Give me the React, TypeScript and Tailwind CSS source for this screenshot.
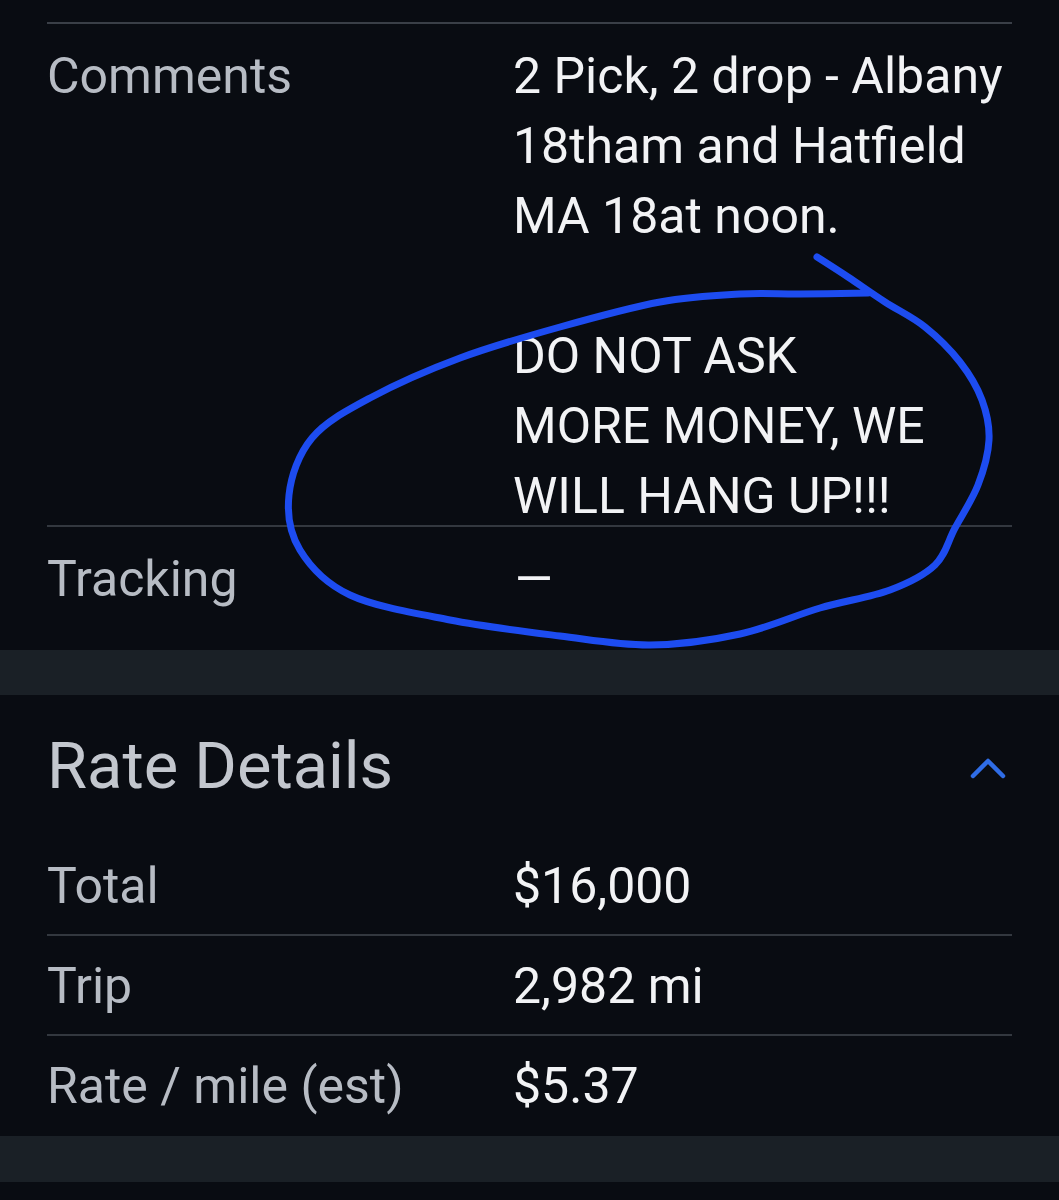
import React from "react";

const font = { fontFamily: "Roboto, 'Noto Sans', sans-serif" };

const loopPoints: [number, number][] = [
  [868, 293], [800, 294], [740, 294], [660, 302], [560, 327], [460, 358], [370, 398], [312, 438],
  [289, 495], [300, 550], [350, 595], [450, 620], [560, 636], [650, 645], [740, 634], [820, 608],
  [890, 590], [935, 565], [955, 528], [978, 485], [989, 440], [982, 400], [960, 362], [925, 327],
  [885, 302], [848, 277], [817, 257],
];

function smoothPath(pts: [number, number][]): string {
  let d = `M ${pts[0][0]} ${pts[0][1]}`;
  for (let i = 0; i < pts.length - 1; i++) {
    const p0 = pts[i - 1] || pts[i];
    const p1 = pts[i];
    const p2 = pts[i + 1];
    const p3 = pts[i + 2] || p2;
    const c1x = p1[0] + (p2[0] - p0[0]) / 6;
    const c1y = p1[1] + (p2[1] - p0[1]) / 6;
    const c2x = p2[0] - (p3[0] - p1[0]) / 6;
    const c2y = p2[1] - (p3[1] - p1[1]) / 6;
    d += ` C ${c1x.toFixed(1)} ${c1y.toFixed(1)}, ${c2x.toFixed(1)} ${c2y.toFixed(1)}, ${p2[0]} ${p2[1]}`;
  }
  return d;
}

function Row({ label, children, divider = true }: { label: string; children: React.ReactNode; divider?: boolean }) {
  return (
    <div className={`grid grid-cols-[466px_1fr] h-[100px] pt-[15px] ${divider ? "border-b-2 border-[#33383f]" : ""}`}>
      <div className="text-[50px] leading-[70px] text-[#b7bcc4]">{label}</div>
      <div className="text-[50px] leading-[70px] text-[#f2f3f5]">{children}</div>
    </div>
  );
}

export default function App() {
  return (
    <div className="relative w-[1059px] min-h-[1200px] bg-[#090c12] overflow-hidden" style={font}>
      {/* Details section tail */}
      <div className="px-[47px] pt-[22px]">
        <div className="border-t-2 border-[#3a3f47]" />
        <div className="grid grid-cols-[466px_1fr] pt-[17px] h-[503px] border-b-2 border-[#33383f]">
          <div className="text-[50px] leading-[70px] text-[#b7bcc4]">Comments</div>
          <div className="text-[50px] leading-[70px] text-[#f2f3f5]">
            <div>2 Pick, 2 drop - Albany</div>
            <div>18tham and Hatfield</div>
            <div>MA 18at noon.</div>
            <div className="h-[70px]" />
            <div>DO NOT ASK</div>
            <div>MORE MONEY, WE</div>
            <div>WILL HANG UP!!!</div>
          </div>
        </div>
        <div className="grid grid-cols-[466px_1fr] pt-[17px] h-[123px]">
          <div className="text-[50px] leading-[70px] text-[#b7bcc4]">Tracking</div>
          <div className="text-[50px] leading-[70px] text-[#f2f3f5]">
            <span className="inline-block origin-left scale-x-[1.3]">–</span>
          </div>
        </div>
      </div>

      <div className="h-[45px] bg-[#1a2026]" />

      {/* Rate Details */}
      <div className="px-[47px]">
        <div className="flex items-center justify-between h-[141px] pt-[2px]">
          <div className="text-[65px] leading-none text-[#c3c7ce]">Rate Details</div>
          <svg width="44" height="28" viewBox="0 0 44 28" className="mr-[2px]">
            <path d="M7 23 L22 8 L37 23" fill="none" stroke="#2f6de6" strokeWidth="4.5" strokeLinecap="round" strokeLinejoin="round" />
          </svg>
        </div>
        <Row label="Total">$16,000</Row>
        <Row label="Trip">2,982 mi</Row>
        <Row label="Rate / mile (est)" divider={false}>$5.37</Row>
      </div>

      <div className="h-[46px] bg-[#1a2026]" />

      {/* hand-drawn circle annotation */}
      <svg className="absolute left-0 top-0 pointer-events-none" width="1059" height="700" viewBox="0 0 1059 700">
        <path
          d={smoothPath(loopPoints)}
          fill="none"
          stroke="#1d4cf0"
          strokeWidth="7"
          strokeLinecap="round"
          strokeLinejoin="round"
        />
      </svg>
    </div>
  );
}
